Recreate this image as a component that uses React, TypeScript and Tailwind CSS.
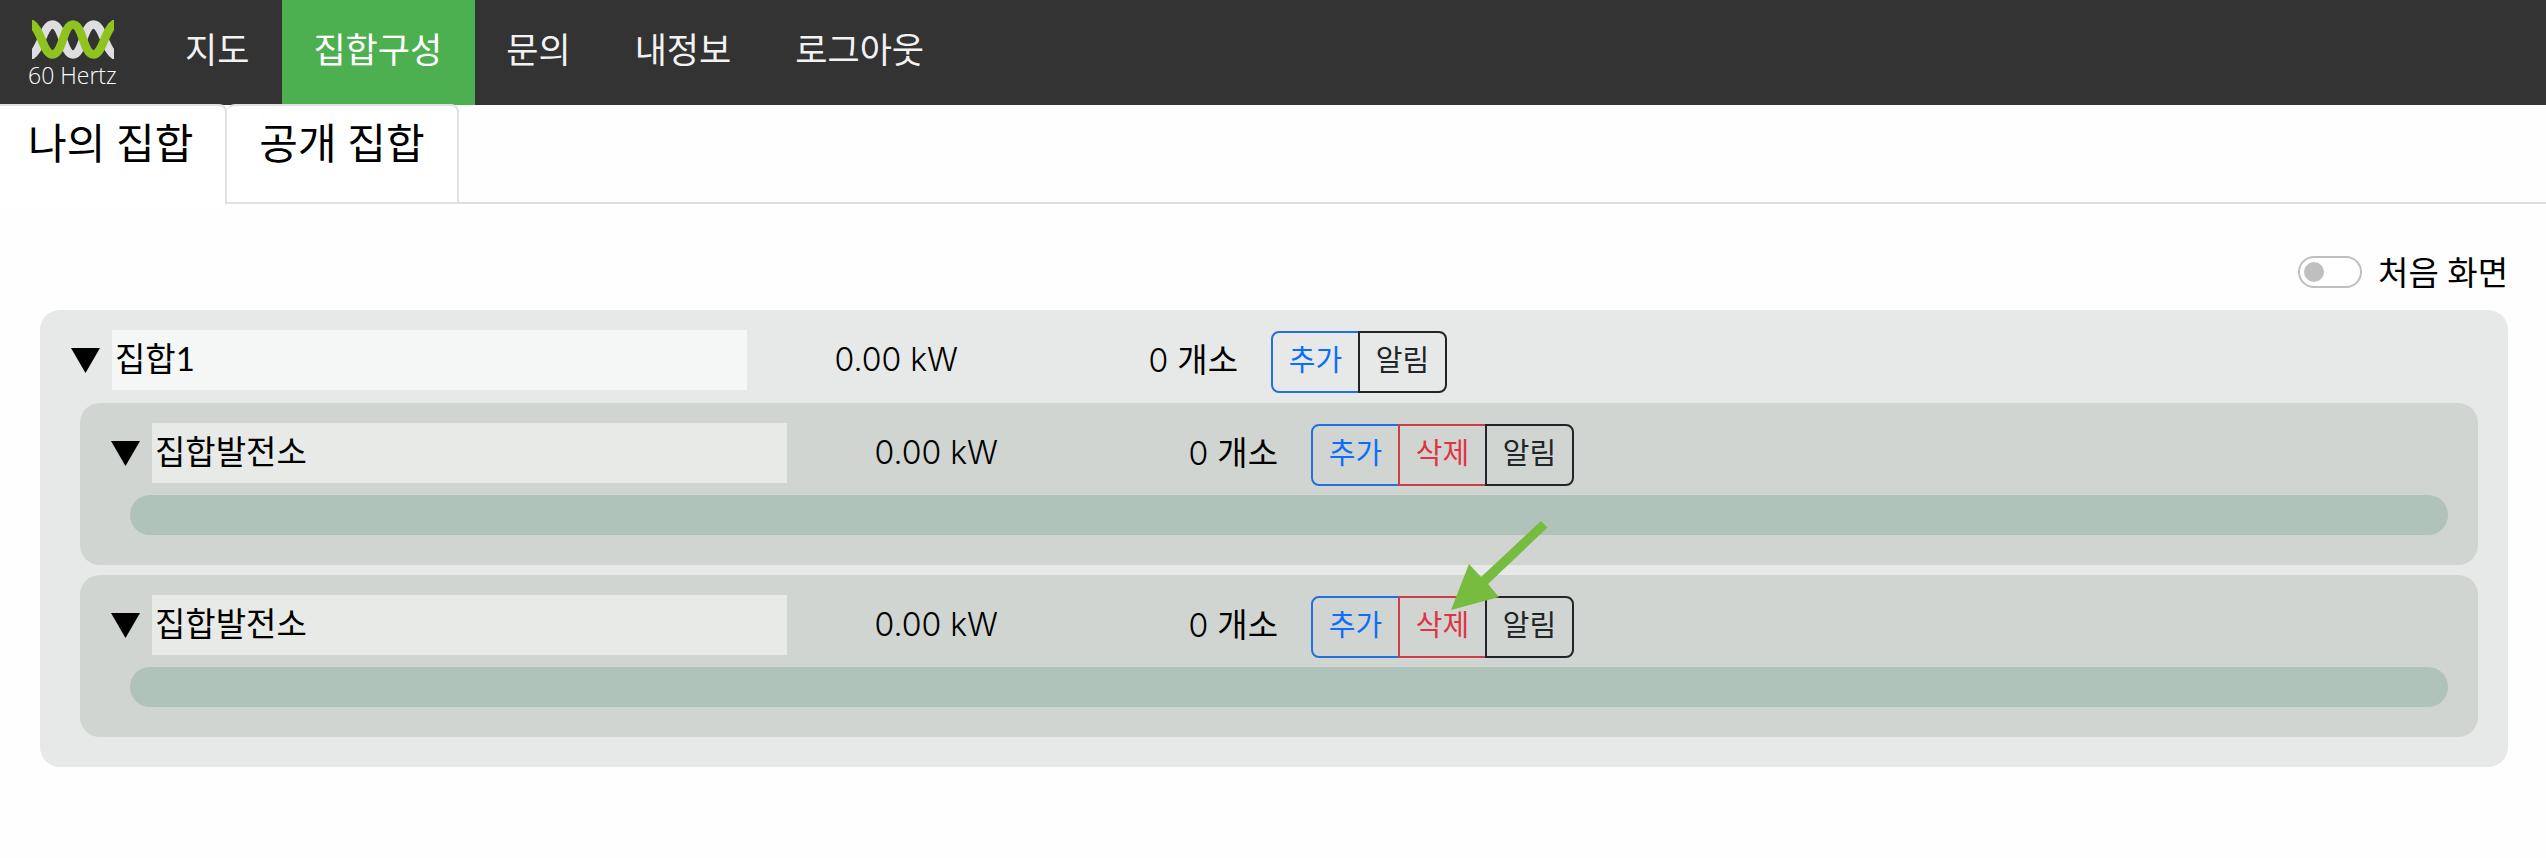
const NAV = [
  { label: '지도', active: false },
  { label: '집합구성', active: true },
  { label: '문의', active: false },
  { label: '내정보', active: false },
  { label: '로그아웃', active: false },
];

function Logo() {
  return (
    <a href="#home" className="flex w-[154px] flex-col items-start pt-5 pl-7 text-white">
      <svg viewBox="0 0 82 39" className="ml-1 h-[39px] w-[82px]" fill="none" strokeWidth="8.5">
        <path
          d="M-2 36 C9 32 11 4.500 20.500 4.500 C31 4.500 31 34.500 41 34.500 C51 34.500 51 4.500 61.500 4.500 C71 4.500 73 32 84 36"
          stroke="#dedee0"
        />
        <path
          d="M-2 3 C9 7 11 34.500 20.500 34.500 C31 34.500 31 4.500 41 4.500 C51 4.500 51 34.500 61.500 34.500 C71 34.500 73 7 84 3"
          stroke="#8fc31f"
        />
      </svg>
      <span className="font-['Open_Sans'] text-[23px] leading-8 font-light whitespace-nowrap">60 Hertz</span>
    </a>
  );
}

function NavBar() {
  return (
    <nav className="flex h-[105px] bg-[#333333]">
      <Logo />
      {NAV.map((item) => (
        <a
          key={item.label}
          href="#nav"
          aria-current={item.active ? 'page' : undefined}
          className={
            item.active
              ? 'bg-[#4caf50] pt-6 pr-[33px] pl-[31px] text-[35px] leading-[50px] whitespace-nowrap text-white'
              : 'pt-6 pr-[33px] pl-[31px] text-[35px] leading-[50px] whitespace-nowrap text-[#f2f2f2]'
          }
        >
          {item.label}
        </a>
      ))}
    </nav>
  );
}

function Tabs() {
  return (
    <div role="tablist" className="-mt-px flex h-[100px] text-[42px] leading-[58px]">
      <button
        role="tab"
        aria-selected="true"
        className="flex rounded-tr-lg border-t-2 border-r-2 border-[#dee2e6] bg-white pt-2 pr-8 pl-7 whitespace-nowrap"
      >
        나의 집합
      </button>
      <button
        role="tab"
        aria-selected="false"
        className="flex rounded-t-lg border-t-2 border-r-2 border-b-2 border-[#dee2e6] bg-white px-8 pt-2 whitespace-nowrap"
      >
        공개 집합
      </button>
      <div className="grow border-b-2 border-[#dedede]" />
    </div>
  );
}

function Pointer() {
  return (
    <svg
      viewBox="0 0 100 92"
      className="pointer-events-none absolute -top-[76px] left-[138px] h-[92px] w-[100px]"
      fill="#77bc3f"
      aria-hidden="true"
    >
      <path d="M2 90 L20 44 L32 57 L92 1 L98.500 7.500 L39 64 L50 77 Z" />
    </svg>
  );
}

function Actions({ removable, pointed }: { removable: boolean; pointed: boolean }) {
  return (
    <div className="relative mt-px ml-[33px] flex text-[29px] leading-[42px]">
      <button className="h-[62px] w-[89px] rounded-l-lg border-2 border-[#2270dd] pb-1 text-[#0d6efd]">추가</button>
      {removable && (
        <button className="-ml-0.5 h-[62px] w-[89px] border-2 border-[#cc3c4b] pb-1 text-[#dc3545]">삭제</button>
      )}
      <button className="-ml-0.5 h-[62px] w-[89px] rounded-r-lg border-2 border-[#212529] pb-1 text-[#212529]">
        알림
      </button>
      {pointed && <Pointer />}
    </div>
  );
}

type RowProps = { name: string; nested?: boolean; pointed?: boolean };

function Row({ name, nested = false, pointed = false }: RowProps) {
  return (
    <div className="flex items-start pl-[31px] whitespace-nowrap">
      <button aria-label="접기" className="mt-[18px] mr-3">
        <svg viewBox="0 0 29 25" className="h-[25px] w-[29px]">
          <path d="M0 0H29L14.500 25Z" />
        </svg>
      </button>
      <input
        aria-label="집합 이름"
        defaultValue={name}
        className={
          nested
            ? 'h-[60px] w-[635px] bg-[#e8eae7] pr-1 pb-1.5 pl-[3px] text-[33px]'
            : 'h-[60px] w-[635px] bg-[#f5f6f6] pr-1 pb-1.5 pl-[3px] text-[33px]'
        }
      />
      <span className="w-[211px] text-right font-[Inter] text-[32px] leading-[60px] font-light">0.00 kW</span>
      <span className="w-[280px] text-right text-[33px] leading-[58px]">
        <span className="font-[Inter] text-[32px] font-light">0 </span>개소
      </span>
      <Actions removable={nested} pointed={pointed} />
    </div>
  );
}

function Plant({ pointed = false }: { pointed?: boolean }) {
  return (
    <section className="mt-2.5 mr-[30px] ml-10 rounded-[20px] bg-[#d1d5d1] pt-5 pb-[30px]">
      <Row name="집합발전소" nested pointed={pointed} />
      <div className="mt-[9px] mr-[30px] ml-[50px] h-10 rounded-[20px] bg-[#afc3ba]" />
    </section>
  );
}

export default function App() {
  return (
    <div className="min-h-screen bg-[#fefefe] font-[Lato,'Noto_Sans_CJK_KR',sans-serif] text-black">
      <NavBar />
      <Tabs />
      <main className="pr-[38px] pb-20 pl-10">
        <label className="flex items-center justify-end gap-4 pt-10 pb-2.5 text-[33px] leading-[56px]">
          <input
            type="checkbox"
            className="h-8 w-16 appearance-none rounded-full border-2 border-[#bfbfbf] bg-white p-1 before:block before:size-5 before:rounded-full before:bg-[#bfbfbf]"
          />
          처음 화면
        </label>
        <section className="rounded-[20px] bg-[#e7e9e8] pt-5 pb-[30px]">
          <Row name="집합1" />
          <Plant />
          <Plant pointed />
        </section>
      </main>
    </div>
  );
}
